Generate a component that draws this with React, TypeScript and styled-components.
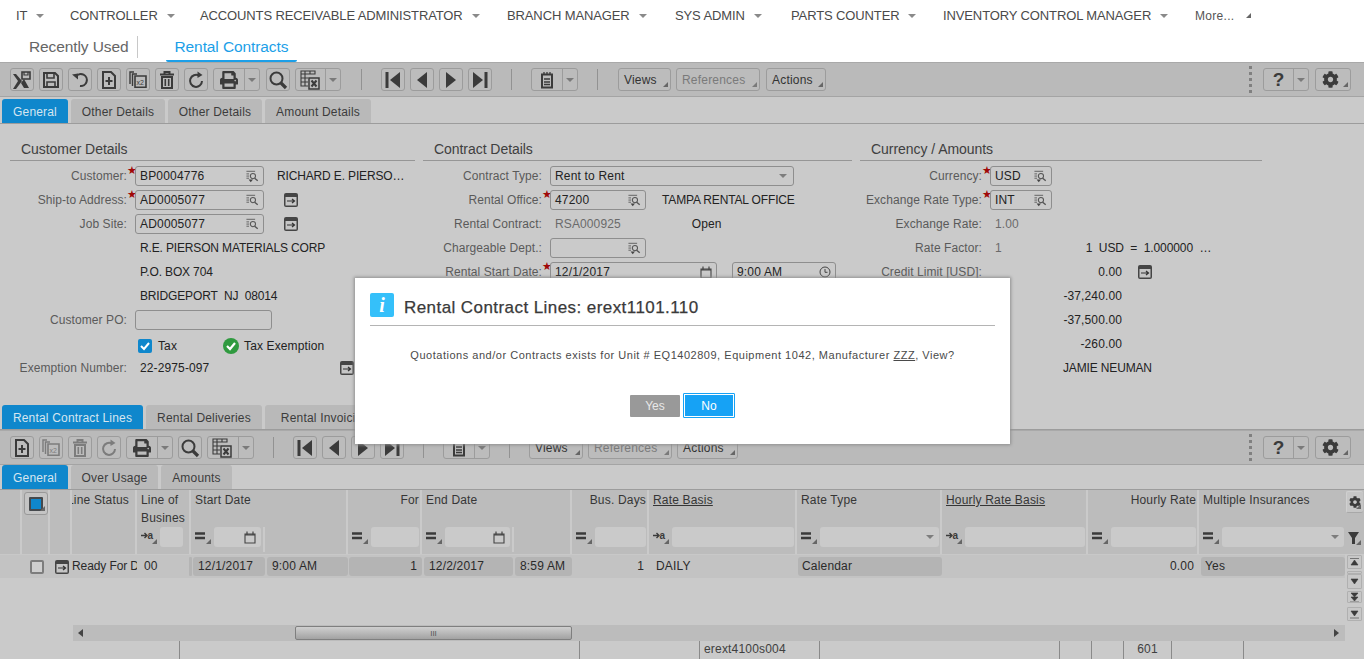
import React from 'react';
import styled, { createGlobalStyle } from 'styled-components';
import { FaCog, FaPrint } from 'react-icons/fa';

const Global = createGlobalStyle`
  html, body { margin: 0; padding: 0; background: #fff; overflow: hidden; }
  body { font-family: "Liberation Sans", Arial, sans-serif; font-size: 12px; color: #2c2c2c; letter-spacing: .18px; }
  * { box-sizing: border-box; }
`;

const Page = styled.div`
  position: relative; width: 1364px; height: 659px; overflow: hidden; background: #cacaca;
`;

/* ---------- top ---------- */
const TopNav = styled.nav`
  height: 31px; background: #fff; display: flex; align-items: center; padding-left: 16px; color: #4a4a4a;
  font-size: 13px; letter-spacing: -.12px;
`;
const NavItem = styled.div<{ $w: number }>`
  width: ${p => p.$w}px; display: flex; align-items: center; gap: 9px; white-space: nowrap;
`;
const Caret = styled.span<{ $c?: string }>`
  width: 0; height: 0; border-left: 4px solid transparent; border-right: 4px solid transparent;
  border-top: 4px solid ${p => p.$c || '#8a8a8a'}; display: inline-block;
`;
const More = styled.span`
  font-size: 12px; display: flex; align-items: center; gap: 12px; color: #555; letter-spacing: .3px;
`;
const Corner = styled.span<{ $c?: string }>`
  width: 0; height: 0; border-left: 5px solid transparent; border-bottom: 5px solid ${p => p.$c || '#666'}; display: inline-block;
`;
const SubTabs = styled.div`
  height: 31px; background: #fff; display: flex; align-items: stretch; padding-left: 12px; font-size: 15.5px; letter-spacing: -.1px;
`;
const SubTab = styled.div<{ $active?: boolean }>`
  display: flex; align-items: center; padding: 2px ${p => p.$active ? 9 : 8}px 0; margin-left: ${p => p.$active ? 28 : 9}px;
  color: ${p => p.$active ? '#1c9fe8' : '#666'};
  border-bottom: 2px solid ${p => p.$active ? '#1c9fe8' : 'transparent'};
  border-radius: 0 0 2px 2px;
`;
const SubDivider = styled.span`
  width: 1px; height: 22px; background: #c8c8c8; align-self: center;
`;

/* ---------- toolbar ---------- */
const Toolbar = styled.div`
  height: 35px; background: #bababa; border-top: 1px solid #a9a9a9; border-bottom: 1px solid #a4a4a4;
  display: flex; align-items: center; padding: 0 13px 0 10px;
`;
const Tool = styled.button<{ $w?: number; $ml?: number; $off?: boolean }>`
  width: ${p => p.$w || 24}px; height: 23px; margin-left: ${p => p.$ml ?? 5}px; padding: 0; flex: none;
  background: #bcbcbc; border: 1px solid #9c9c9c; border-radius: 3px;
  display: flex; align-items: center; justify-content: center; position: relative;
  color: ${p => p.$off ? '#7c7c7c' : '#3b3b3b'}; font: inherit;
`;
const Split = styled(Tool)`
  justify-content: flex-start;
`;
const SplitMain = styled.span`
  flex: 1; height: 100%; display: flex; align-items: center; justify-content: center;
`;
const SplitArrow = styled.span`
  width: 15px; height: 100%; border-left: 1px solid #9c9c9c; display: flex; align-items: center; justify-content: center;
`;
const ToolDivider = styled.span<{ $ml: number }>`
  width: 1px; height: 21px; background: #929292; margin-left: ${p => p.$ml}px; margin-right: 14px; flex: none;
`;
const TextTool = styled(Tool)`
  font-size: 12px; letter-spacing: .2px; justify-content: flex-start; padding-left: 5px; color: ${p => p.$off ? '#7a7a7a' : '#333'};
`;
const CornerAt = styled.span`
  position: absolute; right: 2px; bottom: 3px; line-height: 0;
`;
const Grow = styled.span`flex: 1;`;
const Grip = styled.span`
  width: 3px; height: 28px; flex: none; margin-right: 11px;
  background: radial-gradient(circle at 1.5px 1.5px, #808080 1.5px, transparent 1.6px) 0 0 / 3px 6px repeat-y;
`;

/* ---------- tabs ---------- */
const TabStrip = styled.div<{ $h: number }>`
  height: ${p => p.$h}px; display: flex; align-items: flex-end; padding-left: 2px; gap: 3px; border-bottom: 1px solid #9c9c9c; background: #cacaca;
`;
const Tab = styled.div<{ $w: number; $active?: boolean }>`
  width: ${p => p.$w}px; height: 24px; flex: none; border-radius: 3px 3px 0 0; text-align: center; line-height: 27px; white-space: nowrap; overflow: hidden;
  background: ${p => p.$active ? '#0f87cc' : '#b9b9b9'}; color: ${p => p.$active ? '#d6e6f0' : '#3c3c3c'};
`;

/* ---------- form ---------- */
const Form = styled.div`
  height: 281px; padding: 15px 0 0 10px; display: flex; gap: 8px; align-items: flex-start;
`;
const Section = styled.section<{ $w: number }>`width: ${p => p.$w}px; flex: none;`;
const SectionTitle = styled.h3`
  margin: 0 0 3px; height: 22px; border-bottom: 1px solid #969696; padding: 0 0 0 11px; line-height: 20px;
  font-size: 14px; font-weight: 400; color: #404040; letter-spacing: -.05px;
`;
const Row = styled.div<{ $down?: number }>`
  height: 24px; display: flex; align-items: center; white-space: nowrap; padding-top: ${p => p.$down || 0}px;
`;
const Label = styled.div<{ $w: number }>`
  width: ${p => p.$w}px; flex: none; text-align: right; color: #5a5a5a; overflow: hidden; letter-spacing: .08px;
`;
const Star = styled.span`
  width: 8px; flex: none; align-self: stretch; color: #a00808; font-size: 11px; line-height: 9px; padding-top: 2px; letter-spacing: 0; text-align: left;
`;
const NoStar = styled.span`width: 8px; flex: none;`;
const Input = styled.div<{ $w: number; $ml?: number }>`
  width: ${p => p.$w}px; height: 20px; flex: none; margin-left: ${p => p.$ml || 0}px; border: 1px solid #8e8e8e; border-radius: 3px; padding: 0 4px;
  display: flex; align-items: center; justify-content: space-between; color: #222;
`;
const SelectArrow = styled.span`margin-right: 2px; line-height: 0;`;
const Val = styled.span<{ $ml?: number; $muted?: boolean; $w?: number; $caps?: boolean; $tight?: boolean }>`
  margin-left: ${p => p.$ml ?? 5}px; color: ${p => p.$muted ? '#6a6a6a' : '#222'};
  letter-spacing: ${p => p.$caps ? '-.15px' : p.$tight ? '-.1px' : '.12px'};
  ${p => p.$w ? `width:${p.$w}px; text-align:right; flex:none;` : ''}
`;
const IconSlot = styled.span<{ $ml: number }>`margin-left: ${p => p.$ml}px; line-height: 0; flex: none;`;

/* ---------- grid ---------- */
const bodyColumns = '22px 28px 22px 65px 54px 157px 74px 150px 77px 148px 145px 146px 111px 146px';
const GridHead = styled.div`
  height: 64px; display: grid; grid-template-columns: ${bodyColumns} 19px; background: #bcbcbc;
`;
const HeadCell = styled.div<{ $right?: boolean; $plain?: boolean; $wrap?: boolean; $indent?: number; $last?: boolean }>`
  border-right: ${p => p.$last ? 0 : 2}px solid #cacaca; padding: ${p => p.$plain ? 0 : p.$right ? '1px 1px 0 4px' : '1px 4px 0'}; position: relative; white-space: ${p => p.$wrap ? 'normal' : 'nowrap'};
  text-align: ${p => p.$right ? 'right' : 'left'}; color: #363636; line-height: 18px; overflow: hidden;
  ${p => p.$indent ? `padding-left: 0; text-indent: ${p.$indent}px;` : ''}
`;
const Under = styled.span`text-decoration: underline;`;
const Filter = styled.div`
  position: absolute; left: 3px; right: 1px; bottom: 7px; height: 20px; display: flex; align-items: center; text-indent: 0;
`;
const Op = styled.span`width: 20px; height: 20px; flex: none; position: relative; line-height: 0;`;
const FilterBox = styled.span<{ $w?: number }>`
  ${p => p.$w ? `width:${p.$w}px; flex:none;` : 'flex:1;'} height: 20px; background: #cacaca; border-radius: 3px; display: flex; align-items: center; justify-content: flex-end; padding-right: 5px; min-width: 0;
`;
const InnerSep = styled.span`
  width: 2px; height: 25px; background: #cacaca; margin-left: 2px; flex: none; align-self: flex-start;
`;
const SelectAll = styled.span`
  position: absolute; left: 2px; top: 2px; width: 24px; height: 23px; border: 1px solid #999; border-radius: 3px; display: flex; align-items: center; justify-content: center; background: #c4c4c4;
`;
const Blue = styled.span`width: 14px; height: 14px; background: #0f87cc; border: 2px solid #45494d; display: block; border-radius: 1px;`;
const SideTool = styled.span<{ $top: number; $h: number; $boxed?: boolean }>`
  position: absolute; left: 1px; top: ${p => p.$top}px; height: ${p => p.$h}px; width: 17px; display: flex; align-items: center; justify-content: center;
  ${p => p.$boxed ? 'border-left: 1px solid #d0d0d0; border-top: 1px solid #d0d0d0; border-bottom: 1px solid #a8a8a8; border-radius: 2px; background: #c6c6c6;' : ''}
`;
const GridBody = styled.div`height: 71px; display: flex;`;
const GridMain = styled.div`width: 1345px; flex: none;`;
const GridRow = styled.div`
  height: 24px; display: grid; grid-template-columns: ${bodyColumns}; background: #c3c3c3; border-top: 1px solid #c8c8c8; align-items: center;
`;
const Cell = styled.div<{ $right?: boolean; $pill?: boolean; $pad?: number; $ml?: number; $mr?: number; $narrow?: boolean }>`
  height: 19px; line-height: 19px; white-space: nowrap; overflow: hidden; margin-left: ${p => p.$ml || 0}px; margin-right: ${p => p.$mr ?? 0}px; border-radius: 3px;
  padding: 0 ${p => p.$right ? 5 : 0}px 0 ${p => p.$pad ?? 5}px; text-align: ${p => p.$right ? 'right' : 'left'}; color: #2a2a2a;
  background: ${p => p.$pill ? '#b4b4b4' : 'transparent'};
  ${p => p.$narrow ? 'letter-spacing: -.1px;' : ''}
`;
const CodeCell = styled.div`display: flex; justify-content: space-between; height: 19px; line-height: 19px; padding-left: 7px; padding-right: 0;`;
const Sliver = styled.span`width: 3px; height: 19px; background: #b4b4b4; border-radius: 1px; margin-right: -1px;`;
const DateCell = styled.div`display: flex; gap: 2px; height: 19px; padding-left: 2px;`;
const DatePart = styled.div<{ $w?: number }>`
  ${p => p.$w ? `width:${p.$w}px; flex:none;` : 'flex:1;'} height: 19px; line-height: 19px; padding-left: 5px; border-radius: 3px; background: #b4b4b4; color: #2a2a2a; white-space: nowrap;
`;
const Check = styled.span`
  width: 14px; height: 14px; border: 2px solid #7d7d7d; border-radius: 2px; display: block; margin: 3px 0 0 8px; background: #cfcfcf;
`;
const JumpCell = styled.div`height: 19px; padding: 3px 0 0 5px; line-height: 0;`;
const Empty = styled.div`height: 47px; background: #cacaca;`;
const Stack = styled.div`flex: 1; display: flex; flex-direction: column; align-items: center; padding: 1px 1px 0 0;`;
const StackBtn = styled.span<{ $h: number; $mb: number }>`
  width: 15px; height: ${p => p.$h}px; margin-bottom: ${p => p.$mb}px; flex: none; background: #c8c8c8; border: 1px solid #b0b0b0; border-radius: 1px;
  display: flex; align-items: center; justify-content: center; overflow: hidden;
`;
const HScroll = styled.div`
  margin-left: 73px; width: 1272px; height: 16px; background: #bcbcbc; display: flex; align-items: center; padding: 0 5px;
`;
const Thumb = styled.div`
  margin-left: 211px; width: 277px; height: 14px; border: 1px solid #7f7f7f; border-radius: 2px; background: linear-gradient(#cfcfcf, #a2a2a2); display: flex; align-items: center; justify-content: center; color: #555; font-size: 8px; letter-spacing: 0;
`;
const Status = styled.div`
  height: 18px; display: grid; grid-template-columns: 179px 400px 120px 120px 240px 32px 32px 48px 72px 121px;
`;
const StatusCell = styled.div<{ $center?: boolean }>`
  border-left: 1px solid #8a8a8a; padding-left: ${p => p.$center ? 0 : 4}px; line-height: 17px; color: #404040; text-align: ${p => p.$center ? 'center' : 'left'};
  &:first-child { border-left: 0; }
`;

/* ---------- dialog ---------- */
const Dialog = styled.div`
  position: absolute; left: 355px; top: 278px; width: 655px; height: 166px; background: #fff; box-shadow: 0 0 3px 1px #8f8f8f;
  padding: 15px 15px 0; display: flex; flex-direction: column;
`;
const DialogHead = styled.div`
  height: 33px; flex: none; display: flex; gap: 10px; border-bottom: 1px solid #b4b4b4; align-items: flex-start;
`;
const InfoBox = styled.span`
  width: 24px; height: 24px; background: #35c0fa; border-radius: 2px; color: #fff; display: flex; align-items: center; justify-content: center;
  font: italic 700 20px "Liberation Serif", serif; letter-spacing: 0;
`;
const DialogTitle = styled.div`
  font-size: 17px; line-height: 30px; color: #3a3a3a; letter-spacing: .43px; -webkit-text-stroke: .25px #3a3a3a;
`;
const Message = styled.div`
  margin-top: 22px; text-align: center; color: #4a4a4a; font-size: 11px; letter-spacing: .52px; line-height: 14px;
`;
const DialogButtons = styled.div`
  margin-top: 31px; margin-left: 260px; display: flex; align-items: center; gap: 3px;
`;
const Btn = styled.button<{ $primary?: boolean }>`
  font: inherit; padding: 0; color: ${p => p.$primary ? '#fff' : '#e8e8e8'};
  width: ${p => p.$primary ? 52 : 50}px; height: ${p => p.$primary ? 25 : 22}px; border-radius: 1px;
  background: ${p => p.$primary ? '#16a2f5' : '#999'};
  border: ${p => p.$primary ? '1px solid #16a2f5' : '0'};
  box-shadow: ${p => p.$primary ? 'inset 0 0 0 1px #fff' : 'none'};
`;
const HelpMark = styled.span`font: 700 19px "Liberation Sans", sans-serif; letter-spacing: 0;`;

/* ---------- icons ---------- */
const D = '#3b3b3b';
const Svg: React.FC<{ w?: number; h?: number; children: React.ReactNode; c?: string }> = ({ w = 16, h = 16, children, c = 'currentColor' }) => (
  <svg width={w} height={h} viewBox={`0 0 ${w} ${h}`} fill="none" stroke={c} strokeWidth="2">{children}</svg>
);
const I: Record<string, React.ReactNode> = {
  close: <Svg w={20} h={20}><path d="M1 4h3l6 7 -6 8H1l5-8z M15 18h-3l-3-5 3-4 5 9z" fill="currentColor" stroke="none"/><path d="M10 2h8v7h-8z" strokeWidth="1.6"/><path d="M12 2v3h4V2" strokeWidth="1.2"/></Svg>,
  save: <Svg w={18} h={18}><path d="M2 2h11l3 3v11H2z"/><path d="M5 2v5h7V2M5 16v-5h8v5" strokeWidth="1.6"/></Svg>,
  undo: <Svg w={18} h={18}><path d="M5 5.5A6 6 0 1 1 9 15" strokeWidth="2"/><path d="M1 3.5l6-1v6z" fill="currentColor" stroke="none"/></Svg>,
  add: <Svg w={16} h={18}><path d="M2 1h8l4 4v12H2z"/><path d="M8 6v8M4.5 10h7" strokeWidth="2"/></Svg>,
  copy: <Svg w={18} h={18}><path d="M5 1H1v12" strokeWidth="1.4"/><path d="M8 3H3.5v12" strokeWidth="1.4"/><path d="M6 5.5h11v12H6z" strokeWidth="1.6" transform="scale(1 .93)"/><text x="7.5" y="14" fontSize="7" fontFamily="Liberation Sans" stroke="none" fill="currentColor" letterSpacing="0">x2</text></Svg>,
  trash: <Svg w={16} h={18}><path d="M1 3.5h14M5.5 3V1h5v2" /><path d="M3 6h10v11H3z"/><path d="M6.3 8v7M9.7 8v7" strokeWidth="1.6"/></Svg>,
  redo: <Svg w={16} h={18}><path d="M11 4.7A6 6 0 1 0 14 10" strokeWidth="2"/><path d="M9.5 0.5l5 3.5-5 3z" fill="currentColor" stroke="none"/></Svg>,
  search: <Svg w={20} h={20}><circle cx="8.5" cy="8.5" r="6" strokeWidth="2"/><path d="M13 13l5 5" strokeWidth="3.2"/></Svg>,
  excel: <Svg w={22} h={20}><path d="M1 1h14v3H1zM1 4v12h7M1 8h7M1 12h7M5 1v15M10 1v3" strokeWidth="1.1"/><path d="M9 8h10v11H9z" strokeWidth="1.5"/><path d="M11.5 10.5l5 6M16.5 10.5l-5 6" strokeWidth="2"/></Svg>,
  first: <Svg w={16} h={18}><path d="M2 1v16" strokeWidth="3"/><path d="M15 1v16L5 9z" fill="currentColor" stroke="none"/></Svg>,
  prev: <Svg w={12} h={18}><path d="M11 1v16L1 9z" fill="currentColor" stroke="none"/></Svg>,
  next: <Svg w={12} h={18}><path d="M1 1v16L11 9z" fill="currentColor" stroke="none"/></Svg>,
  last: <Svg w={16} h={18}><path d="M14 1v16" strokeWidth="3"/><path d="M1 1v16L11 9z" fill="currentColor" stroke="none"/></Svg>,
  note: <Svg w={14} h={18}><path d="M2 3.5h10v13H2z"/><path d="M4 1v3M7 1v3M10 1v3M4 8h6M4 11h6M4 13.5h6" strokeWidth="1.3"/></Svg>,
};
const Tiny: React.FC = () => <Caret $c="#7a7a7a" />;
const Lookup: React.FC<{ arrow?: boolean }> = ({ arrow }) => (
  <svg width="13" height="13" viewBox="0 0 15 15" fill="none" stroke="#555">
    <path d="M0.5 1.5h10M0.5 4.5h3M0.5 7h3M0.5 9.5h3" strokeWidth="1"/>
    <circle cx="8" cy="7" r="3" strokeWidth="1.2"/>
    <path d="M10 9.5l3.5 3" strokeWidth="1.6"/>
    {arrow && <path d="M3 11h5l-2.5 3z" fill="#444" stroke="none"/>}
  </svg>
);
const Jump: React.FC = () => (
  <svg width="14" height="14" viewBox="0 0 14 14">
    <rect width="14" height="14" rx="2" fill="#454545"/>
    <rect x="1.5" y="4" width="11" height="8.5" fill="#c6c6c6"/>
    <path d="M3 8h7M8 6l2.5 2L8 10" stroke="#333" strokeWidth="1.2" fill="none"/>
  </svg>
);
const Cal: React.FC = () => (
  <Svg w={12} h={13} c="#444"><path d="M1 3h10v9H1z" strokeWidth="1.1"/><path d="M1 3.8h10M3 0.5v3M9 0.5v3" strokeWidth="1.2"/></Svg>
);
const Clock: React.FC = () => (
  <Svg w={12} h={12} c="#444"><circle cx="6" cy="6" r="5" strokeWidth="1"/><path d="M6 3v3.3h2.5" strokeWidth="1"/></Svg>
);
const OpEq: React.FC = () => (
  <Op><Svg w={20} h={20} c="#3b3b3b"><path d="M1 6.5h10M1 11h10" strokeWidth="2.4"/><path d="M17 12v5h-5z" fill="#666" stroke="none"/></Svg></Op>
);
const OpArrow: React.FC = () => (
  <Op><Svg w={20} h={20} c="#3b3b3b"><path d="M1 8.5h5M4.5 6l2.5 2.5L4.5 11" strokeWidth="1.4"/><text x="7.5" y="11.5" fontSize="10" fontWeight="700" fontFamily="Liberation Sans" fill="#3b3b3b" stroke="none" letterSpacing="0">a</text><path d="M17 12v5h-5z" fill="#666" stroke="none"/></Svg></Op>
);
const ArrowDown: React.FC = () => <Caret $c="#7d7d7d" />;

const Bar: React.FC<{ top?: boolean }> = ({ top }) => {
  const off = !top;
  return (
    <Toolbar>
      {top && <Tool $ml={0}>{I.close}</Tool>}
      {top && <Tool>{I.save}</Tool>}
      {top && <Tool>{I.undo}</Tool>}
      <Tool $ml={top ? 5 : 0}>{I.add}</Tool>
      <Tool $off={off}>{I.copy}</Tool>
      <Tool $off={off}>{I.trash}</Tool>
      <Tool $off={off}>{I.redo}</Tool>
      <Split $w={47}><SplitMain><FaPrint size={18} /></SplitMain><SplitArrow><Tiny /></SplitArrow></Split>
      <Tool $ml={top ? 6 : 5}>{I.search}</Tool>
      <Split $w={top ? 46 : 47}><SplitMain>{I.excel}</SplitMain><SplitArrow><Tiny /></SplitArrow></Split>
      <ToolDivider $ml={top ? 20 : 19} />
      <Tool>{I.first}</Tool>
      <Tool>{I.prev}</Tool>
      <Tool>{I.next}</Tool>
      <Tool>{I.last}</Tool>
      <ToolDivider $ml={19} />
      <Split $w={47}><SplitMain>{I.note}</SplitMain><SplitArrow><Tiny /></SplitArrow></Split>
      <ToolDivider $ml={19} />
      <TextTool $w={top ? 53 : 54} $ml={top ? 6 : 5}>Views<CornerAt><Corner /></CornerAt></TextTool>
      <TextTool $w={84} $off>References<CornerAt><Corner $c="#7a7a7a" /></CornerAt></TextTool>
      <TextTool $w={top ? 60 : 61} $ml={top ? 6 : 5}>Actions<CornerAt><Corner /></CornerAt></TextTool>
      <Grow />
      <Grip />
      <Split $w={46} $ml={0}><SplitMain><HelpMark>?</HelpMark></SplitMain><SplitArrow><Tiny /></SplitArrow></Split>
      <Tool $w={36} $ml={6}><FaCog size={17} style={{ marginRight: 6 }} /><CornerAt><Corner /></CornerAt></Tool>
    </Toolbar>
  );
};

const StarMark = () => <Star>★</Star>;
const Sk: React.FC<{ d: string }> = ({ d }) => (
  <svg width="11" height="11" viewBox="0 0 11 11"><path d={d} fill="#3b3b3b" stroke="#3b3b3b" strokeWidth=".6"/></svg>
);

export default function App() {
  return (
    <Page>
      <Global />
      <TopNav>
        <NavItem $w={54}>IT <Caret /></NavItem>
        <NavItem $w={130}>CONTROLLER <Caret /></NavItem>
        <NavItem $w={307}>ACCOUNTS RECEIVABLE ADMINISTRATOR <Caret /></NavItem>
        <NavItem $w={168}>BRANCH MANAGER <Caret /></NavItem>
        <NavItem $w={116}>SYS ADMIN <Caret /></NavItem>
        <NavItem $w={152}>PARTS COUNTER <Caret /></NavItem>
        <NavItem $w={252}>INVENTORY CONTROL MANAGER <Caret /></NavItem>
        <More>More... <Corner /></More>
      </TopNav>
      <SubTabs>
        <SubTab>Recently Used</SubTab>
        <SubDivider />
        <SubTab $active>Rental Contracts</SubTab>
      </SubTabs>
      <Bar top />
      <TabStrip $h={27}>
        <Tab $w={66} $active>General</Tab>
        <Tab $w={94}>Other Details</Tab>
        <Tab $w={94}>Other Details</Tab>
        <Tab $w={106}>Amount Details</Tab>
      </TabStrip>
      <Form>
        <Section $w={405}>
          <SectionTitle>Customer Details</SectionTitle>
          <Row><Label $w={117}>Customer:</Label><StarMark /><Input $w={129}>BP0004776<Lookup arrow /></Input><Val $ml={13} $caps>RICHARD E. PIERSO…</Val></Row>
          <Row><Label $w={117}>Ship-to Address:</Label><StarMark /><Input $w={129}>AD0005077<Lookup /></Input><IconSlot $ml={20}><Jump /></IconSlot></Row>
          <Row><Label $w={117}>Job Site:</Label><NoStar /><Input $w={129}>AD0005077<Lookup /></Input><IconSlot $ml={20}><Jump /></IconSlot></Row>
          <Row><Label $w={117} /><NoStar /><Val $caps>R.E. PIERSON MATERIALS CORP</Val></Row>
          <Row><Label $w={117} /><NoStar /><Val $caps>P.O. BOX 704</Val></Row>
          <Row><Label $w={117} /><NoStar /><Val $caps>BRIDGEPORT&nbsp; NJ&nbsp; 08014</Val></Row>
          <Row><Label $w={117}>Customer PO:</Label><NoStar /><Input $w={137} /></Row>
          <Row $down={4}>
            <Label $w={117} /><NoStar />
            <IconSlot $ml={3}>
              <svg width="14" height="14" viewBox="0 0 14 14"><rect width="14" height="14" rx="2" fill="#0f87cc"/><path d="M3 7l3 3 5-6" stroke="#fff" strokeWidth="2" fill="none"/></svg>
            </IconSlot>
            <Val $ml={6}>Tax</Val>
            <IconSlot $ml={46}>
              <svg width="16" height="16" viewBox="0 0 16 16"><circle cx="8" cy="8" r="8" fill="#2f9a3f"/><path d="M4 8l3 3 5-6" stroke="#fff" strokeWidth="2.2" fill="none"/></svg>
            </IconSlot>
            <Val>Tax Exemption</Val>
          </Row>
          <Row><Label $w={117}>Exemption Number:</Label><NoStar /><Val>22-2975-097</Val><IconSlot $ml={131}><Jump /></IconSlot></Row>
        </Section>
        <Section $w={429}>
          <SectionTitle>Contract Details</SectionTitle>
          <Row><Label $w={119}>Contract Type:</Label><NoStar /><Input $w={244}>Rent to Rent<SelectArrow><ArrowDown /></SelectArrow></Input></Row>
          <Row><Label $w={119}>Rental Office:</Label><StarMark /><Input $w={96}>47200<Lookup arrow /></Input><Val $ml={16} $caps>TAMPA RENTAL OFFICE</Val></Row>
          <Row><Label $w={119}>Rental Contract:</Label><NoStar /><Val $muted>RSA000925</Val><Val $ml={71}>Open</Val></Row>
          <Row><Label $w={119}>Chargeable Dept.:</Label><NoStar /><Input $w={96}><span /><Lookup arrow /></Input></Row>
          <Row><Label $w={119}>Rental Start Date:</Label><StarMark /><Input $w={167}>12/1/2017<Cal /></Input><Input $w={104} $ml={15}>9:00 AM<Clock /></Input></Row>
        </Section>
        <Section $w={402}>
          <SectionTitle>Currency / Amounts</SectionTitle>
          <Row><Label $w={122}>Currency:</Label><StarMark /><Input $w={62}>USD<Lookup arrow /></Input></Row>
          <Row><Label $w={122}>Exchange Rate Type:</Label><StarMark /><Input $w={62}>INT<Lookup arrow /></Input></Row>
          <Row><Label $w={122}>Exchange Rate:</Label><NoStar /><Val $muted>1.00</Val></Row>
          <Row><Label $w={122}>Rate Factor:</Label><NoStar /><Val $muted>1</Val><Val $ml={84} $tight>1&nbsp; USD&nbsp; =&nbsp; 1.000000&nbsp; …</Val></Row>
          <Row><Label $w={122}>Credit Limit [USD]:</Label><NoStar /><Val $ml={0} $w={132}>0.00</Val><IconSlot $ml={16}><Jump /></IconSlot></Row>
          <Row><Label $w={122} /><NoStar /><Val $ml={0} $w={132}>-37,240.00</Val></Row>
          <Row><Label $w={122} /><NoStar /><Val $ml={0} $w={132}>-37,500.00</Val></Row>
          <Row><Label $w={122} /><NoStar /><Val $ml={0} $w={132}>-260.00</Val></Row>
          <Row><Label $w={122} /><NoStar /><Val $ml={73} $caps>JAMIE NEUMAN</Val></Row>
        </Section>
      </Form>
      <TabStrip $h={25}>
        <Tab $w={141} $active>Rental Contract Lines</Tab>
        <Tab $w={116}>Rental Deliveries</Tab>
        <Tab $w={120}>Rental Invoicing</Tab>
      </TabStrip>
      <Bar />
      <TabStrip $h={25}>
        <Tab $w={66} $active>General</Tab>
        <Tab $w={87}>Over Usage</Tab>
        <Tab $w={71}>Amounts</Tab>
      </TabStrip>
      <GridHead>
        <HeadCell $plain />
        <HeadCell $plain><SelectAll><Blue /><CornerAt><Corner /></CornerAt></SelectAll></HeadCell>
        <HeadCell $plain />
        <HeadCell $indent={-5}>Line Status</HeadCell>
        <HeadCell $wrap>Line of Busines<Filter><OpArrow /><FilterBox $w={23} /></Filter></HeadCell>
        <HeadCell>Start Date<Filter><OpEq /><FilterBox $w={47}><Cal /></FilterBox><InnerSep /></Filter></HeadCell>
        <HeadCell $right>For<Filter><OpEq /><FilterBox $w={48} /></Filter></HeadCell>
        <HeadCell>End Date<Filter><OpEq /><FilterBox $w={65}><Cal /></FilterBox><InnerSep /></Filter></HeadCell>
        <HeadCell $right>Bus. Days<Filter><OpEq /><FilterBox /></Filter></HeadCell>
        <HeadCell><Under>Rate Basis</Under><Filter><OpArrow /><FilterBox /></Filter></HeadCell>
        <HeadCell>Rate Type<Filter><OpEq /><FilterBox><ArrowDown /></FilterBox></Filter></HeadCell>
        <HeadCell><Under>Hourly Rate Basis</Under><Filter><OpArrow /><FilterBox /></Filter></HeadCell>
        <HeadCell $right>Hourly Rate<Filter><OpEq /><FilterBox /></Filter></HeadCell>
        <HeadCell $last>Multiple Insurances<Filter><OpEq /><FilterBox><ArrowDown /></FilterBox></Filter></HeadCell>
        <HeadCell $plain $last>
          <SideTool $top={1} $h={22} $boxed><FaCog size={12} color={D} /><CornerAt><Corner /></CornerAt></SideTool>
          <SideTool $top={38} $h={20}><svg width="14" height="14" viewBox="0 0 14 14"><path d="M0 1h11L7 7v6L4 13V7z" fill={D}/></svg><CornerAt><Corner /></CornerAt></SideTool>
        </HeadCell>
      </GridHead>
      <GridBody>
        <GridMain>
          <GridRow>
            <Cell $pad={0} />
            <Cell $pad={0}><Check /></Cell>
            <JumpCell><Jump /></JumpCell>
            <Cell $pad={0} $narrow>Ready For D</Cell>
            <CodeCell>00<Sliver /></CodeCell>
            <DateCell><DatePart $w={72}>12/1/2017</DatePart><DatePart>9:00 AM</DatePart></DateCell>
            <Cell $pill $right $ml={1}>1</Cell>
            <DateCell><DatePart $w={89}>12/2/2017</DatePart><DatePart>8:59 AM</DatePart></DateCell>
            <Cell $right>1</Cell>
            <Cell $pad={7}>DAILY</Cell>
            <Cell $pill $pad={4} $ml={1}>Calendar</Cell>
            <Cell />
            <Cell $right>0.00</Cell>
            <Cell $pill $pad={4} $ml={2}>Yes</Cell>
          </GridRow>
          <Empty />
        </GridMain>
        <Stack>
          <StackBtn $h={14} $mb={2}><Sk d="M1 1.5h9M5.5 3L2 8h7z" /></StackBtn>
          <StackBtn $h={3} $mb={0}><span /></StackBtn>
          <StackBtn $h={15} $mb={2}><Sk d="M2 3h7L5.5 8z" /></StackBtn>
          <StackBtn $h={12} $mb={4}><Sk d="M2 1h7L5.5 5zM2 5h7L5.5 9zM1 10h9" /></StackBtn>
          <StackBtn $h={14} $mb={0}><Sk d="M2 2h7L5.5 7zM1 9h9" /></StackBtn>
        </Stack>
      </GridBody>
      <HScroll>
        <svg width="6" height="8" viewBox="0 0 6 8"><path d="M5 0v8L0 4z" fill="#444"/></svg>
        <Thumb>III</Thumb>
        <Grow />
        <svg width="6" height="8" viewBox="0 0 6 8"><path d="M0 0v8l5-4z" fill="#444"/></svg>
      </HScroll>
      <Status>
        <StatusCell /><StatusCell /><StatusCell /><StatusCell>erext4100s004</StatusCell><StatusCell /><StatusCell /><StatusCell /><StatusCell $center>601</StatusCell><StatusCell /><StatusCell />
      </Status>
      <Dialog>
        <DialogHead>
          <InfoBox>i</InfoBox>
          <DialogTitle>Rental Contract Lines: erext1101.110</DialogTitle>
        </DialogHead>
        <Message>Quotations and/or Contracts exists for Unit # EQ1402809, Equipment 1042, Manufacturer <Under>ZZZ</Under>, View?</Message>
        <DialogButtons>
          <Btn>Yes</Btn>
          <Btn $primary>No</Btn>
        </DialogButtons>
      </Dialog>
    </Page>
  );
}
